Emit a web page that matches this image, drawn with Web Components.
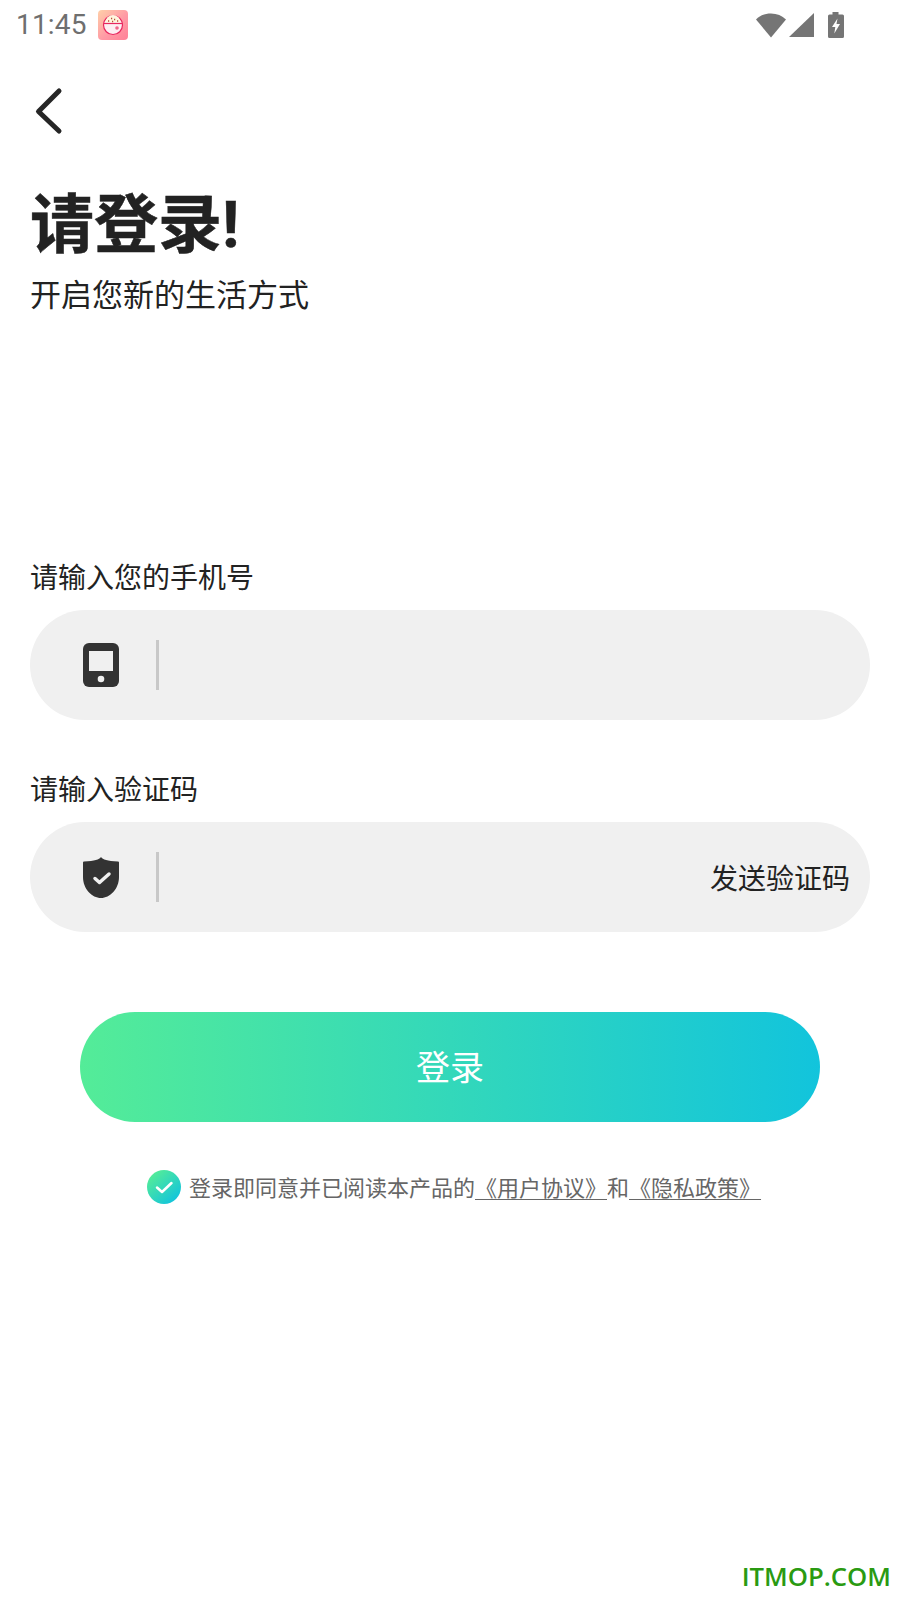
<!DOCTYPE html>
<html lang="zh">
<head>
<meta charset="utf-8">
<title>登录</title>
<style>
  html, body { margin: 0; background: #fff; }
  body {
    width: 900px;
    height: 1600px;
    overflow: hidden;
    font-family: Roboto, "Noto Sans CJK SC", sans-serif;
    display: flex;
    flex-direction: column;
  }
</style>
</head>
<body>
<status-bar></status-bar>
<back-button></back-button>
<login-title heading="请登录!" sub="开启您新的生活方式"></login-title>
<field-row label="请输入您的手机号" icon="phone" style="margin-top:240px"></field-row>
<field-row label="请输入验证码" icon="shield" action="发送验证码" style="margin-top:48px"></field-row>
<login-button style="margin-top:80px">登录</login-button>
<agree-line></agree-line>
<site-mark>ITMOP.COM</site-mark>

<script>
class StatusBar extends HTMLElement {
  constructor () {
    super();
    this.attachShadow({mode: 'open'}).innerHTML = `
    <style>
      :host { display: flex; align-items: center; height: 50px; padding: 0 0 0 16px; box-sizing: border-box; color: #6f6f6f; }
      .time { font: 400 28px/50px Roboto, sans-serif; letter-spacing: .2px; }
      .app { margin-left: 11px; width: 30px; height: 30px; display: block; }
      .right { margin-left: auto; margin-right: 56px; display: flex; align-items: center; }
      svg { display: block; }
    </style>
    <span class="time">11:45</span>
    <svg class="app" viewBox="0 0 30 30">
      <defs><linearGradient id="a" x1="0" y1="0" x2="1" y2="1"><stop offset="0" stop-color="#ffd0a8"/><stop offset=".55" stop-color="#ff9aa5"/><stop offset="1" stop-color="#ff8098"/></linearGradient></defs>
      <rect width="30" height="30" rx="4" fill="url(#a)"/>
      <circle cx="15" cy="15" r="9.500" fill="#fdeef2" stroke="#e8265e" stroke-width="1.200"/>
      <path d="M7.500 12.500a7.500 7.500 0 0 1 15 0z" fill="#fff6de"/>
      <path d="M5.500 13.500h19" stroke="#e8265e" stroke-width="1.200"/>
      <path d="M10 11h1.200M13 8.500h1.200M16 9.500h1.200M19 11h1.200M14 11.500h1.200" stroke="#b8503a" stroke-width="1.400"/>
      <circle cx="19" cy="18" r="1.800" fill="#f0668a"/>
    </svg>
    <div class="right">
      <svg width="30" height="26" viewBox="0 0 30 26"><path d="M0 7.500C4 3.500 9 1.500 15 1.500s11 2 15 6L15 25.500z" fill="#757575"/></svg>
      <svg width="25" height="26" viewBox="0 0 25 26" style="margin-left:3px"><path d="M0 25 25 1v24z" fill="#757575"/></svg>
      <svg width="16" height="26" viewBox="0 0 16 26" style="margin-left:14px"><path d="M4.500 0h6v2.500h4q1.500 0 1.500 1.500v20.500q0 1.500-1.500 1.500h-13Q0 26 0 24.500V4q0-1.500 1.500-1.500h3z" fill="#757575"/><path d="M9.500 6.500 4 15h3.300l-1 6.500 5.700-9.500H8.500z" fill="#fff"/></svg>
    </div>`;
  }
}

class BackButton extends HTMLElement {
  constructor () {
    super();
    this.attachShadow({mode: 'open'}).innerHTML = `
    <style>
      :host { display: block; height: 60px; margin-top: 35px; padding-left: 33px; }
      svg { display: block; }
    </style>
    <svg width="32" height="50" viewBox="0 0 32 50"><path d="M26 6 5.500 26.500 26 46" fill="none" stroke="#262626" stroke-width="5" stroke-linecap="round" stroke-linejoin="round"/></svg>`;
  }
}

class LoginTitle extends HTMLElement {
  constructor () {
    super();
    this.attachShadow({mode: 'open'}).innerHTML = `
    <style>
      :host { display: block; padding-left: 30px; margin-top: 46px; color: #222; font-family: "Noto Sans CJK SC", sans-serif; }
      h1 { margin: 0; font-family: Roboto, "Noto Sans CJK SC", sans-serif; font-size: 64px; line-height: 70px; font-weight: 700; -webkit-text-stroke: .5px #222; }
      p { margin: 9px 0 0; font-size: 31px; line-height: 46px; font-weight: 400; }
    </style>
    <h1></h1><p></p>`;
  }
  connectedCallback () {
    this.shadowRoot.querySelector('h1').textContent = this.getAttribute('heading');
    this.shadowRoot.querySelector('p').textContent = this.getAttribute('sub');
  }
}

const fieldIcons = {
  phone: `<svg width="36" height="44" viewBox="0 0 36 44"><rect width="36" height="44" rx="6" fill="#333"/><rect x="6" y="8" width="24" height="20" fill="#f0f0f0"/><circle cx="18" cy="36" r="3.300" fill="#f0f0f0"/></svg>`,
  shield: `<svg width="36" height="41" viewBox="0 0 36 41"><path d="M18 0C20 2.500 24 4 35 4.500q1 0 1 1V20c0 12-9 21-18 21S0 32 0 20V5.500q0-1 1-1C12 4 16 2.500 18 0z" fill="#333"/><path d="M12 21.500 16.500 25.500 26 17" fill="none" stroke="#f0f0f0" stroke-width="3.500" stroke-linecap="round" stroke-linejoin="round"/></svg>`
};

class FieldRow extends HTMLElement {
  constructor () {
    super();
    this.attachShadow({mode: 'open'}).innerHTML = `
    <style>
      :host { display: block; padding: 0 30px; font-family: "Noto Sans CJK SC", sans-serif; color: #222; }
      label { display: block; font-size: 28px; line-height: 40px; margin-bottom: 14px; }
      .box { height: 110px; border-radius: 55px; background: #f0f0f0; display: flex; align-items: center; padding: 0 20px 0 52px; box-sizing: border-box; }
      .icon { width: 38px; display: flex; justify-content: center; }
      .icon svg { display: block; }
      .line { width: 3px; height: 50px; background: #c8c8c8; margin-left: 36px; }
      .action { margin-left: auto; font-size: 28px; }
    </style>
    <label></label>
    <div class="box">
      <span class="icon"></span>
      <span class="line"></span>
      <span class="action"></span>
    </div>`;
  }
  connectedCallback () {
    const root = this.shadowRoot;
    root.querySelector('label').textContent = this.getAttribute('label');
    root.querySelector('.icon').innerHTML = fieldIcons[this.getAttribute('icon')];
    root.querySelector('.action').textContent = this.getAttribute('action') || '';
  }
}

class LoginButton extends HTMLElement {
  constructor () {
    super();
    this.attachShadow({mode: 'open'}).innerHTML = `
    <style>
      :host { display: flex; align-items: center; justify-content: center; box-sizing: border-box; height: 110px; padding-bottom: 4px; margin-left: 80px; margin-right: 80px; border-radius: 55px; background: linear-gradient(90deg, #54ec98, #12c4dc); color: #fff; font: 400 34px "Noto Sans CJK SC", sans-serif; }
    </style>
    <slot></slot>`;
  }
}

class AgreeLine extends HTMLElement {
  constructor () {
    super();
    this.attachShadow({mode: 'open'}).innerHTML = `
    <style>
      :host { display: flex; align-items: center; justify-content: center; margin-top: 47px; padding-left: 8px; height: 34px; color: #666; font: 400 22px/34px "Noto Sans CJK SC", sans-serif; white-space: nowrap; }
      svg { display: block; margin: 2px 8px 0 0; }
      u { text-underline-offset: 3px; text-decoration-thickness: 1px; }
    </style>
    <svg width="34" height="34" viewBox="0 0 34 34">
      <defs><linearGradient id="g" x1=".15" y1=".1" x2=".85" y2=".9"><stop offset="0" stop-color="#54ec98"/><stop offset="1" stop-color="#12c4dc"/></linearGradient></defs>
      <circle cx="17" cy="17" r="17" fill="url(#g)"/>
      <path d="M10 17.500 15 22 24.500 13" fill="none" stroke="#fff" stroke-width="2.500" stroke-linecap="round" stroke-linejoin="round"/>
    </svg>
    <span>登录即同意并已阅读本产品的<u>《用户协议》</u>和<u>《隐私政策》</u></span>`;
  }
}

class SiteMark extends HTMLElement {
  constructor () {
    super();
    this.attachShadow({mode: 'open'}).innerHTML = `
    <style>
      :host { display: block; margin-top: auto; margin-bottom: 3px; padding-right: 9px; text-align: right; color: #2a9a12; font: 600 25.700px/40px "Open Sans", sans-serif; }
    </style>
    <slot></slot>`;
  }
}

customElements.define('status-bar', StatusBar);
customElements.define('back-button', BackButton);
customElements.define('login-title', LoginTitle);
customElements.define('field-row', FieldRow);
customElements.define('login-button', LoginButton);
customElements.define('agree-line', AgreeLine);
customElements.define('site-mark', SiteMark);
</script>
</body>
</html>
